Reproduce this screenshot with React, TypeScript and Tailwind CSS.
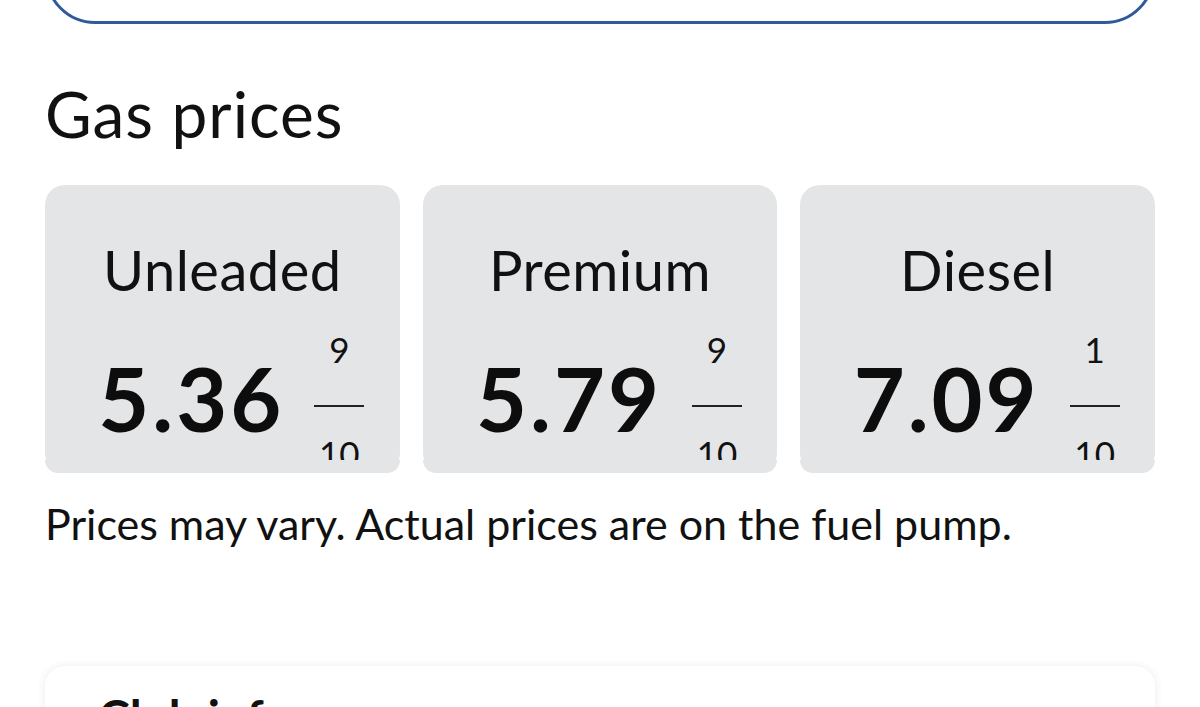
import React from 'react'

const fuels = [
	{ name: 'Unleaded', price: '5.36', num: '9' },
	{ name: 'Premium', price: '5.79', num: '9' },
	{ name: 'Diesel', price: '7.09', num: '1' },
]

const PriceCard = ({ name, price, num }: { name: string; price: string; num: string }) => {
	return (
		<div className="relative h-[288px] rounded-[20px] bg-[#e4e5e7] pt-[57px]">
			<p className="text-center text-[56px] leading-none tracking-[0.5px] text-[#111]">{name}</p>
			<div className="mt-[34px] flex items-start justify-center gap-[30px] pl-[18px]">
				<p className="mt-[22px] text-[88px] font-bold leading-none tracking-[3px] text-[#0d0d0d]">{price}</p>
				<div className="flex flex-col items-center">
					<span className="text-[35px] leading-none text-[#111]">{num}</span>
					<span className="mt-[38px] h-[2px] w-[50px] bg-[#222]" />
					<span className="mt-[29px] text-[35px] leading-none text-[#111]">10</span>
				</div>
			</div>
			{/* the denominator gets cut off by the card on the app */}
			<div className="absolute bottom-0 left-0 right-0 h-[13px] rounded-b-[20px] bg-[#e4e5e7]" />
		</div>
	)
}

const App = () => {
	return (
		<div className="h-[707px] overflow-hidden bg-white px-[45px] font-['Lato',sans-serif] text-black">
			<div className="mt-[-76px] h-[100px] rounded-[50px] border-[3px] border-[#30599b]" />
			<h1 className="mt-[58px] text-[64px] leading-none tracking-[1px] text-[#111]">Gas prices</h1>
			<div className="mt-[39px] grid grid-cols-3 gap-[23px]">
				{fuels.map(fuel => (
					<PriceCard key={fuel.name} {...fuel} />
				))}
			</div>
			<p className="mt-[29px] text-[43px] leading-none text-[#111]">
				Prices may vary. Actual prices are on the fuel pump.
			</p>
			<div className="mt-[121px] rounded-[20px] bg-white px-[53px] pt-[27px] pb-10 shadow-[0_0_10px_rgba(0,0,0,0.08)]">
				<h2 className="text-[48px] font-bold leading-none text-[#111]">Club info</h2>
			</div>
		</div>
	)
}

export default App
